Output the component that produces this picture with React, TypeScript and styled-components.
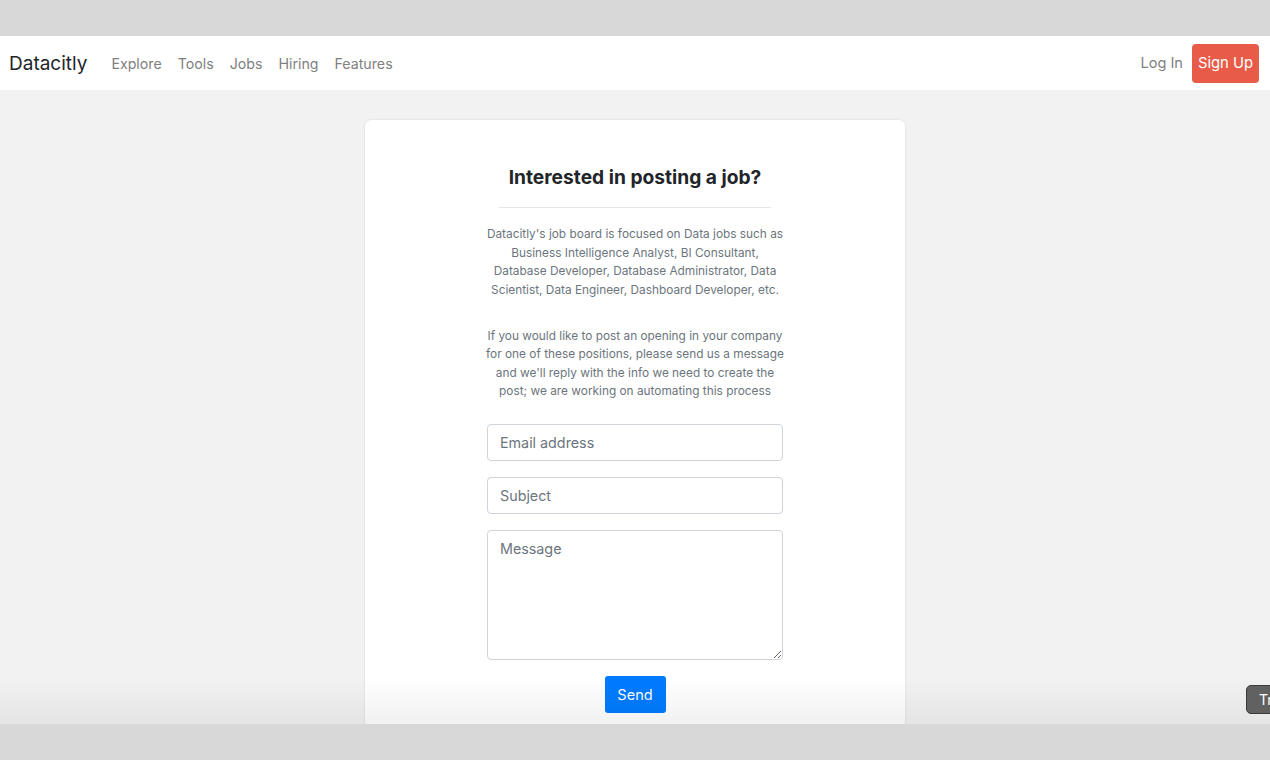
import styled, { createGlobalStyle } from "styled-components"

const GlobalStyle = createGlobalStyle`
    html, body {
        margin: 0;
        padding: 0;
        font-family: Inter, "Liberation Sans", sans-serif;
        background: #d8d8d8;
    }
    * { box-sizing: border-box; }
`

const Frame = styled.div`
    display: flex;
    flex-direction: column;
    width: 1270px;
    height: 760px;
    overflow: hidden;
    position: relative;
`

const Band = styled.div`
    height: 36px;
    flex: none;
    background: #d8d8d8;
`

const Viewport = styled.div`
    position: relative;
    height: 688px;
    flex: none;
    overflow: hidden;
    background: #f2f2f2;
    display: flex;
    flex-direction: column;
`

const Navbar = styled.nav`
    height: 54px;
    flex: none;
    background: #fff;
    display: flex;
    align-items: center;
    padding: 0 11px 0 9px;
`

const Brand = styled.a`
    font-size: 19px;
    color: #212529;
    margin-right: 24px;
`

const NavLinks = styled.div`
    display: flex;
    gap: 16px;
    flex: 1;
`

const NavLink = styled.a`
    font-size: 14.2px;
    color: #808080;
`

const LoginLink = styled(NavLink)`
    font-size: 14.6px;
`

const SignUp = styled.button`
    border: none;
    background: #e85b48;
    color: #fff;
    font-family: inherit;
    font-size: 14.8px;
    height: 39px;
    width: 67px;
    padding: 0;
    border-radius: 4px;
    margin-left: 9px;
`

const Main = styled.main`
    display: flex;
    justify-content: center;
    padding-top: 30px;
`

const Card = styled.section`
    width: 540px;
    background: #fff;
    border-radius: 6px;
    box-shadow: 0 0 3px rgba(0, 0, 0, 0.1);
    padding: 45px 0 40px;
    display: flex;
    flex-direction: column;
    align-items: center;
    min-height: 700px;
`

const Title = styled.h2`
    margin: 0;
    font-size: 19.2px;
    font-weight: 700;
    color: #212529;
    line-height: 24px;
`

const Divider = styled.hr`
    width: 272px;
    border: none;
    border-top: 1px solid #e6e6e6;
    margin: 18px 0 17px;
`

const Column = styled.div`
    width: 300px;
    display: flex;
    flex-direction: column;
    align-items: center;
`

const Text = styled.p`
    margin: 0 0 27.5px;
    font-size: 11.85px;
    line-height: 18.5px;
    color: #6c757d;
    text-align: center;
`

const Form = styled.form`
    width: 296px;
    display: flex;
    flex-direction: column;
    align-items: center;
    gap: 16px;
    margin-top: -4px;
`

const Field = styled.input`
    width: 100%;
    height: 37px;
    border: 1px solid #ced4da;
    border-radius: 4px;
    padding: 0 12px;
    font-family: inherit;
    font-size: 14.3px;
    color: #495057;
    &::placeholder { color: #6c757d; }
`

const Area = styled.textarea<{ $rows: number }>`
    width: 100%;
    height: ${p => p.$rows}px;
    border: 1px solid #ced4da;
    border-radius: 4px;
    padding: 7px 12px;
    font-family: inherit;
    font-size: 14.3px;
    line-height: 22px;
    resize: vertical;
    &::placeholder { color: #6c757d; }
`

const Send = styled.button`
    border: none;
    background: #007bff;
    color: #fff;
    font-family: inherit;
    font-size: 14.6px;
    height: 37px;
    width: 61px;
    padding: 0;
    border-radius: 3px;
`

const Fade = styled.div`
    position: absolute;
    left: 0;
    right: 0;
    bottom: 0;
    height: 48px;
    background: linear-gradient(rgba(255, 255, 255, 0), rgba(0, 0, 0, 0.055));
    pointer-events: none;
`

const Badge = styled.div`
    position: absolute;
    left: 1246px;
    top: 649px;
    width: 60px;
    height: 29px;
    background: #616161;
    border: 1px solid #3a3a3a;
    border-radius: 5px;
    color: #fff;
    font-size: 14px;
    line-height: 27px;
    padding-left: 12px;
`

export default function App() {
    return (
        <Frame>
            <GlobalStyle />
            <Band />
            <Viewport>
                <Navbar>
                    <Brand>Datacitly</Brand>
                    <NavLinks>
                        <NavLink>Explore</NavLink>
                        <NavLink>Tools</NavLink>
                        <NavLink>Jobs</NavLink>
                        <NavLink>Hiring</NavLink>
                        <NavLink>Features</NavLink>
                    </NavLinks>
                    <LoginLink>Log In</LoginLink>
                    <SignUp>Sign Up</SignUp>
                </Navbar>
                <Main>
                    <Card>
                        <Title>Interested in posting a job?</Title>
                        <Divider />
                        <Column>
                            <Text>
                                Datacitly's job board is focused on Data jobs such as Business Intelligence Analyst, BI Consultant, Database Developer, Database Administrator, Data Scientist, Data Engineer, Dashboard Developer, etc.
                            </Text>
                            <Text>
                                If you would like to post an opening in your company for one of these positions, please send us a message and we'll reply with the info we need to create the post; we are working on automating this process
                            </Text>
                        </Column>
                        <Form onSubmit={e => e.preventDefault()}>
                            <Field placeholder="Email address" />
                            <Field placeholder="Subject" />
                            <Area $rows={130} placeholder="Message" />
                            <Send type="submit">Send</Send>
                        </Form>
                    </Card>
                </Main>
                <Fade />
                <Badge>Try</Badge>
            </Viewport>
            <Band />
        </Frame>
    )
}
